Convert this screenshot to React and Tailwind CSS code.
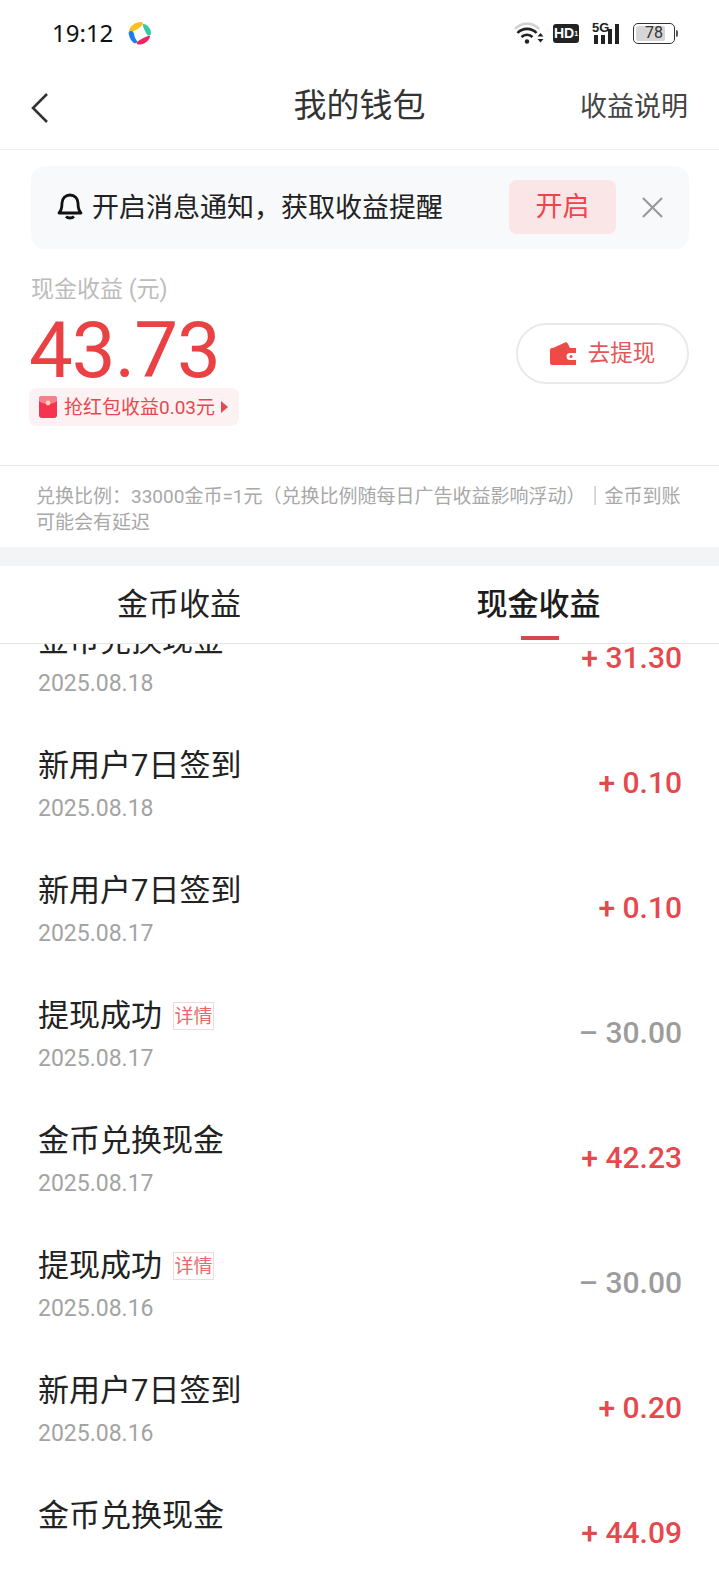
const sans = "font-['Roboto','Noto_Sans_CJK_SC',sans-serif]";

const rows = [
  { t: "金币兑换现金", d: "2025.08.18", a: "+ 31.30" },
  { t: "新用户7日签到", d: "2025.08.18", a: "+ 0.10" },
  { t: "新用户7日签到", d: "2025.08.17", a: "+ 0.10" },
  { t: "提现成功", d: "2025.08.17", a: "– 30.00", neg: true },
  { t: "金币兑换现金", d: "2025.08.17", a: "+ 42.23" },
  { t: "提现成功", d: "2025.08.16", a: "– 30.00", neg: true },
  { t: "新用户7日签到", d: "2025.08.16", a: "+ 0.20" },
  { t: "金币兑换现金", d: "", a: "+ 44.09" },
];

function AppLogo() {
  return (
    <svg width="24" height="24" viewBox="0 0 24 24">
      <path d="M1 10C2 5 7 1 13 1C15 1 15.500 2.500 14.500 4C12 7 8 9 4 11C2.500 11.500 1 11 1 10z" fill="#fbbf24" />
      <path d="M16 3C20 4 23 8 23 12C23 14 21.500 15 20 14.500C18 13 16 8 15 5C14.800 3.500 15 3 16 3z" fill="#34c9a3" />
      <path d="M22 16C20 21 15 24 10 23.500C8.500 23 8 21.500 9.500 20.500C13 18 17 16 20 15C21.500 14.800 22.500 15 22 16z" fill="#f0245f" />
      <path d="M1 14C0 11.500 1 10 3 10C5 10 5.500 11 6 13C6.500 16 7.500 18 9 20C9.500 21.500 8 23 6 22C3.500 20.500 1.800 17.500 1 14z" fill="#1a7bf0" />
    </svg>
  );
}

function StatusIcons() {
  return (
    <div className="flex items-center">
      <svg width="30" height="24" viewBox="0 0 30 24">
        <path d="M1 8C7 1 19 1 25 8" fill="none" stroke="#d1d1d1" strokeWidth="2.6" />
        <path d="M3.500 12c5-5.500 14-5.500 19 0" fill="none" stroke="#222" strokeWidth="2.6" />
        <path d="M7.500 16c3-3 8-3 11 0" fill="none" stroke="#222" strokeWidth="2.6" />
        <circle cx="13" cy="20.500" r="2.200" fill="#222" />
        <path d="M26.500 12l3 3.500h-6zM26.500 21.500l3-3.500h-6z" fill="#222" />
      </svg>
      <div className="ml-[9px] flex h-[19px] w-[26px] items-center justify-center rounded-[3px] bg-[#222] text-[14px] font-bold leading-none text-white font-['Liberation_Sans',sans-serif]">
        HD<span className="text-[7px]">1</span>
      </div>
      <div className="relative ml-[13px] h-[21px] w-[31px]">
        <span className="absolute left-0 top-[-2px] text-[13px] font-bold leading-none text-[#222] font-['Liberation_Sans',sans-serif]">5G</span>
        <div className="absolute bottom-0 left-[2px] flex items-end gap-[3px]">
          <div className="h-[9px] w-[4px] bg-[#222]" />
          <div className="h-[9px] w-[4px] bg-[#222]" />
          <div className="h-[15px] w-[4px] bg-[#222]" />
          <div className="h-[20px] w-[4px] bg-[#222]" />
        </div>
      </div>
      <div className="ml-[10px] flex items-center">
        <div className="relative h-[21px] w-[42px] rounded-[5px] border border-[#333] p-[2px]">
          <div className="h-full w-[29px] rounded-[2px] bg-[#d6d6d6]" />
          <span className="absolute inset-0 flex items-center justify-center text-[16px] leading-none text-[#333] font-['Roboto',sans-serif]">78</span>
        </div>
        <div className="ml-[1px] h-[7px] w-[2px] rounded-r bg-[#555]" />
      </div>
    </div>
  );
}

function Row({ r }) {
  return (
    <div className="flex h-[125px] items-center justify-between pl-[38px] pr-[37px]">
      <div>
        <div className="flex h-[36px] items-center text-[31px] leading-[36px] text-[#222]">
          {r.t}
          {r.neg && (
            <span className="ml-[11px] flex h-[28px] w-[41px] items-center justify-center border border-[#f8d7d9] text-[19px] leading-none text-[#e9686c]">详情</span>
          )}
        </div>
        <div className="mt-[11px] h-[28px] text-[23px] leading-[28px] text-[#a3a3a3]">{r.d}</div>
      </div>
      <div className={`mb-[6px] text-[30px] font-medium leading-none ${r.neg ? "text-[#9c9c9c]" : "text-[#e5484d]"}`}>{r.a}</div>
    </div>
  );
}

export default function App() {
  return (
    <div className={`flex h-[1584px] w-[719px] flex-col overflow-hidden bg-white ${sans}`}>
      <div className="flex h-[66px] shrink-0 items-center justify-between pl-[52px] pr-[41px]">
        <div className="flex items-center gap-[15px]">
          <span className="text-[24px] leading-none text-[#111] font-['Noto_Sans',sans-serif]">19:12</span>
          <AppLogo />
        </div>
        <StatusIcons />
      </div>

      <div className="relative flex h-[84px] shrink-0 items-center justify-between border-b border-[#efefef] pl-[30px] pr-[31px]">
        <svg width="20" height="32" viewBox="0 0 20 32" fill="none" stroke="#333" strokeWidth="2.6">
          <path d="M17 2L3 16l14 14" />
        </svg>
        <span className="absolute left-0 right-0 pb-[4px] text-center text-[33px] leading-none text-[#333]">我的钱包</span>
        <span className="relative text-[27px] leading-none text-[#444]">收益说明</span>
      </div>

      <div className="ml-[31px] mr-[30px] mt-[16px] flex h-[83px] shrink-0 items-center rounded-[14px] bg-[#f8f9fb] pl-[25px]">
        <svg className="mb-[4px]" width="28" height="30" viewBox="0 0 28 30" fill="none" stroke="#111" strokeWidth="2.800" strokeLinejoin="round">
          <path d="M3 22c3-3 3-6 3-10a8 8 0 0116 0c0 4 0 7 3 10z" />
          <path d="M10 25.500c2 2 6 2 8 0" />
        </svg>
        <span className="ml-[8px] whitespace-nowrap pt-[1px] text-[27px] leading-none text-[#222]">开启消息通知，获取收益提醒</span>
        <div className="mb-[1px] ml-auto flex h-[54px] w-[107px] items-center justify-center rounded-[8px] bg-[#fae6e7] text-[27px] leading-none text-[#f0444a]">开启</div>
        <svg className="ml-[26px] mr-[26px]" width="21" height="21" viewBox="0 0 22 22" stroke="#999" strokeWidth="2.200" fill="none">
          <path d="M1 1l20 20M21 1L1 21" />
        </svg>
      </div>

      <div className="relative h-[217px] shrink-0 border-b border-[#eaeaea] pl-[29px]">
        <div className="mt-[27px] pl-[2px] text-[23px] leading-[28px] text-[#bcbcbc]">现金收益 (元)</div>
        <div className="mt-[11px] text-[78px] leading-[72px] tracking-[-1px] text-[#ea4145] font-['Roboto',sans-serif]">43.73</div>
        <div className="mt-[1px] flex h-[38px] w-[210px] items-center rounded-[8px] bg-[#fdf2f3] pl-[10px]">
          <svg width="18" height="22" viewBox="0 0 18 22">
            <rect width="18" height="22" rx="3" fill="#f5344f" />
            <path d="M0 5c4 4 14 4 18 0V3a3 3 0 00-3-3H3a3 3 0 00-3 3z" fill="#fb7f8e" />
            <circle cx="9" cy="7" r="2.400" fill="#ffd9b0" />
          </svg>
          <span className="ml-[7px] whitespace-nowrap text-[19px] leading-none text-[#e5484d]">抢红包收益0.03元</span>
          <svg className="ml-[6px]" width="7" height="12" viewBox="0 0 7 12"><path d="M0 0l7 6-7 6z" fill="#e5484d" /></svg>
        </div>
        <div className="absolute right-[30px] top-[74px] flex h-[61px] w-[173px] items-center justify-center rounded-full border-2 border-[#e9e9e9]">
          <svg width="26" height="26" viewBox="0 0 26 26">
            <path d="M3 7L15 1.500C16 1 17 1.500 18 3L20 7z" fill="#ef4a46" />
            <path d="M0 9a2 2 0 012-2h24v5h-6a3.500 3.500 0 000 7h6v5H2a2 2 0 01-2-2z" fill="#ef4a46" />
            <circle cx="21" cy="15.500" r="1.500" fill="#ef4a46" />
          </svg>
          <span className="ml-[12px] text-[22.500px] leading-none text-[#e5565a]">去提现</span>
        </div>
      </div>

      <div className="h-[81px] shrink-0 pl-[36px] pr-[36px] pt-[18px] text-[19px] leading-[26px] text-[#a8a8a8]">
        兑换比例：33000金币=1元（兑换比例随每日广告收益影响浮动）｜金币到账可能会有延迟
      </div>

      <div className="h-[19px] shrink-0 bg-[#f3f4f6]" />

      <div className="relative flex h-[78px] shrink-0 border-b border-[#e5e5e5] bg-white text-[31px] leading-none">
        <div className="flex w-[358px] items-center justify-center text-[#222]">金币收益</div>
        <div className="flex w-[361px] items-center justify-center font-medium text-[#1c1c1c]">现金收益</div>
        <div className="absolute bottom-[3px] left-[521px] h-[4px] w-[38px] bg-[#d8474c]" />
      </div>

      <div className="min-h-0 flex-1 overflow-hidden">
        <div className="mt-[-46px]">
          {rows.map((r, i) => (
            <Row key={i} r={r} />
          ))}
        </div>
      </div>
    </div>
  );
}
